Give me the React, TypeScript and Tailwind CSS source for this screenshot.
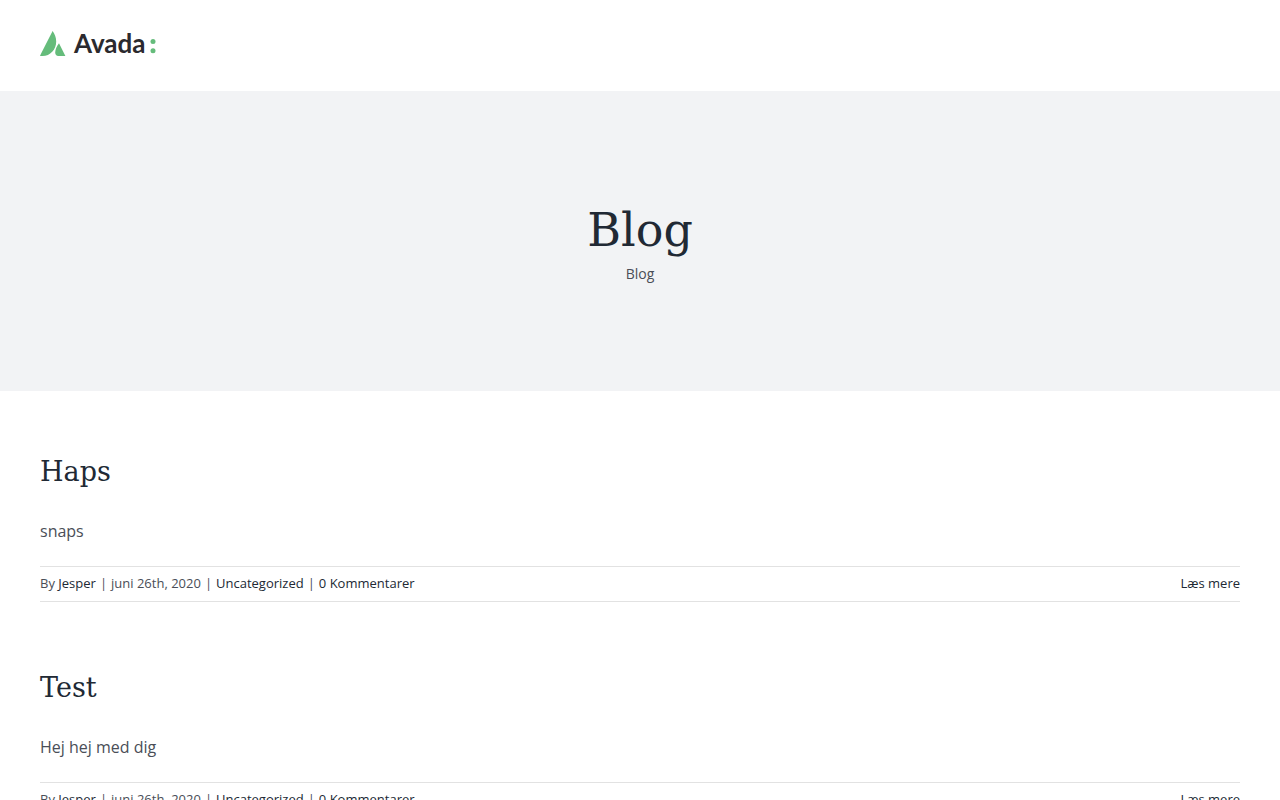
import React from 'react';

type Post = {
  id: number;
  title: string;
  text: string;
  author: string;
  date: string;
  category: string;
  comments: string;
};

const posts: Post[] = [
  {
    id: 1,
    title: 'Haps',
    text: 'snaps',
    author: 'Jesper',
    date: 'juni 26th, 2020',
    category: 'Uncategorized',
    comments: '0 Kommentarer',
  },
  {
    id: 2,
    title: 'Test',
    text: 'Hej hej med dig',
    author: 'Jesper',
    date: 'juni 26th, 2020',
    category: 'Uncategorized',
    comments: '0 Kommentarer',
  },
];

function Logo() {
  return (
    <a href="#" className="flex h-[26px] items-center">
      <svg width="26" height="26" viewBox="0 0 26 26" fill="#65bc7b" aria-hidden="true">
        <path d="M12.6 1C14.6 3.9 16.2 7.6 16.2 11.4C16.2 19.4 10.2 26 2.6 26H0C0.3 25.2 0.7 24.4 1.1 23.6Z" />
        <path d="M19 13.2L25.4 26H18.2C16.5 26 15.2 24.6 15.2 22.8C15.2 19.3 16.8 16 19 13.2Z" />
      </svg>
      <span className="ml-2 font-['Lato',sans-serif] text-[26px] leading-[26px] font-bold text-[#2b2a2e]">
        Avada
      </span>
      <svg className="ml-1" width="6" height="26" viewBox="0 0 6 26" fill="#65bc7b" aria-hidden="true">
        <circle cx="3" cy="11.6" r="2.5" />
        <circle cx="3" cy="20.8" r="2.5" />
      </svg>
    </a>
  );
}

function Separator() {
  return <span className="px-1">|</span>;
}

function PostItem({ post }: { post: Post }) {
  return (
    <article className="mb-[65px]">
      <h2 className="font-['DejaVu_Serif',serif] text-[27px] leading-[42px] text-[#212934]">
        <a href="#">{post.title}</a>
      </h2>
      <p className="mt-6 text-base leading-7">{post.text}</p>
      <div className="mt-[21px] flex justify-between border-y border-[#e2e2e2] pt-[3px] pb-[5px] text-[13px] leading-[26px]">
        <p>
          By{' '}
          <a href="#" className="text-[#212934]">
            {post.author}
          </a>
          <Separator />
          {post.date}
          <Separator />
          <a href="#" className="text-[#212934]">
            {post.category}
          </a>
          <Separator />
          <a href="#" className="text-[#212934]">
            {post.comments}
          </a>
        </p>
        <a href="#" className="text-[#212934]">
          Læs mere
        </a>
      </div>
    </article>
  );
}

export default function App() {
  return (
    <div className="min-h-screen bg-white font-['Open_Sans',sans-serif] text-[#4a4e57]">
      <header className="px-10 pt-[30px] pb-[35px]">
        <Logo />
      </header>
      <section className="flex h-[300px] flex-col items-center justify-center bg-[#f2f3f5]">
        <h1 className="font-['DejaVu_Serif',serif] text-[46px] leading-[66px] text-[#212934]">
          Blog
        </h1>
        <nav className="text-sm leading-[22px]">
          <span>Blog</span>
        </nav>
      </section>
      <main className="px-10 pt-[60px]">
        {posts.map((post) => (
          <PostItem key={post.id} post={post} />
        ))}
      </main>
    </div>
  );
}
